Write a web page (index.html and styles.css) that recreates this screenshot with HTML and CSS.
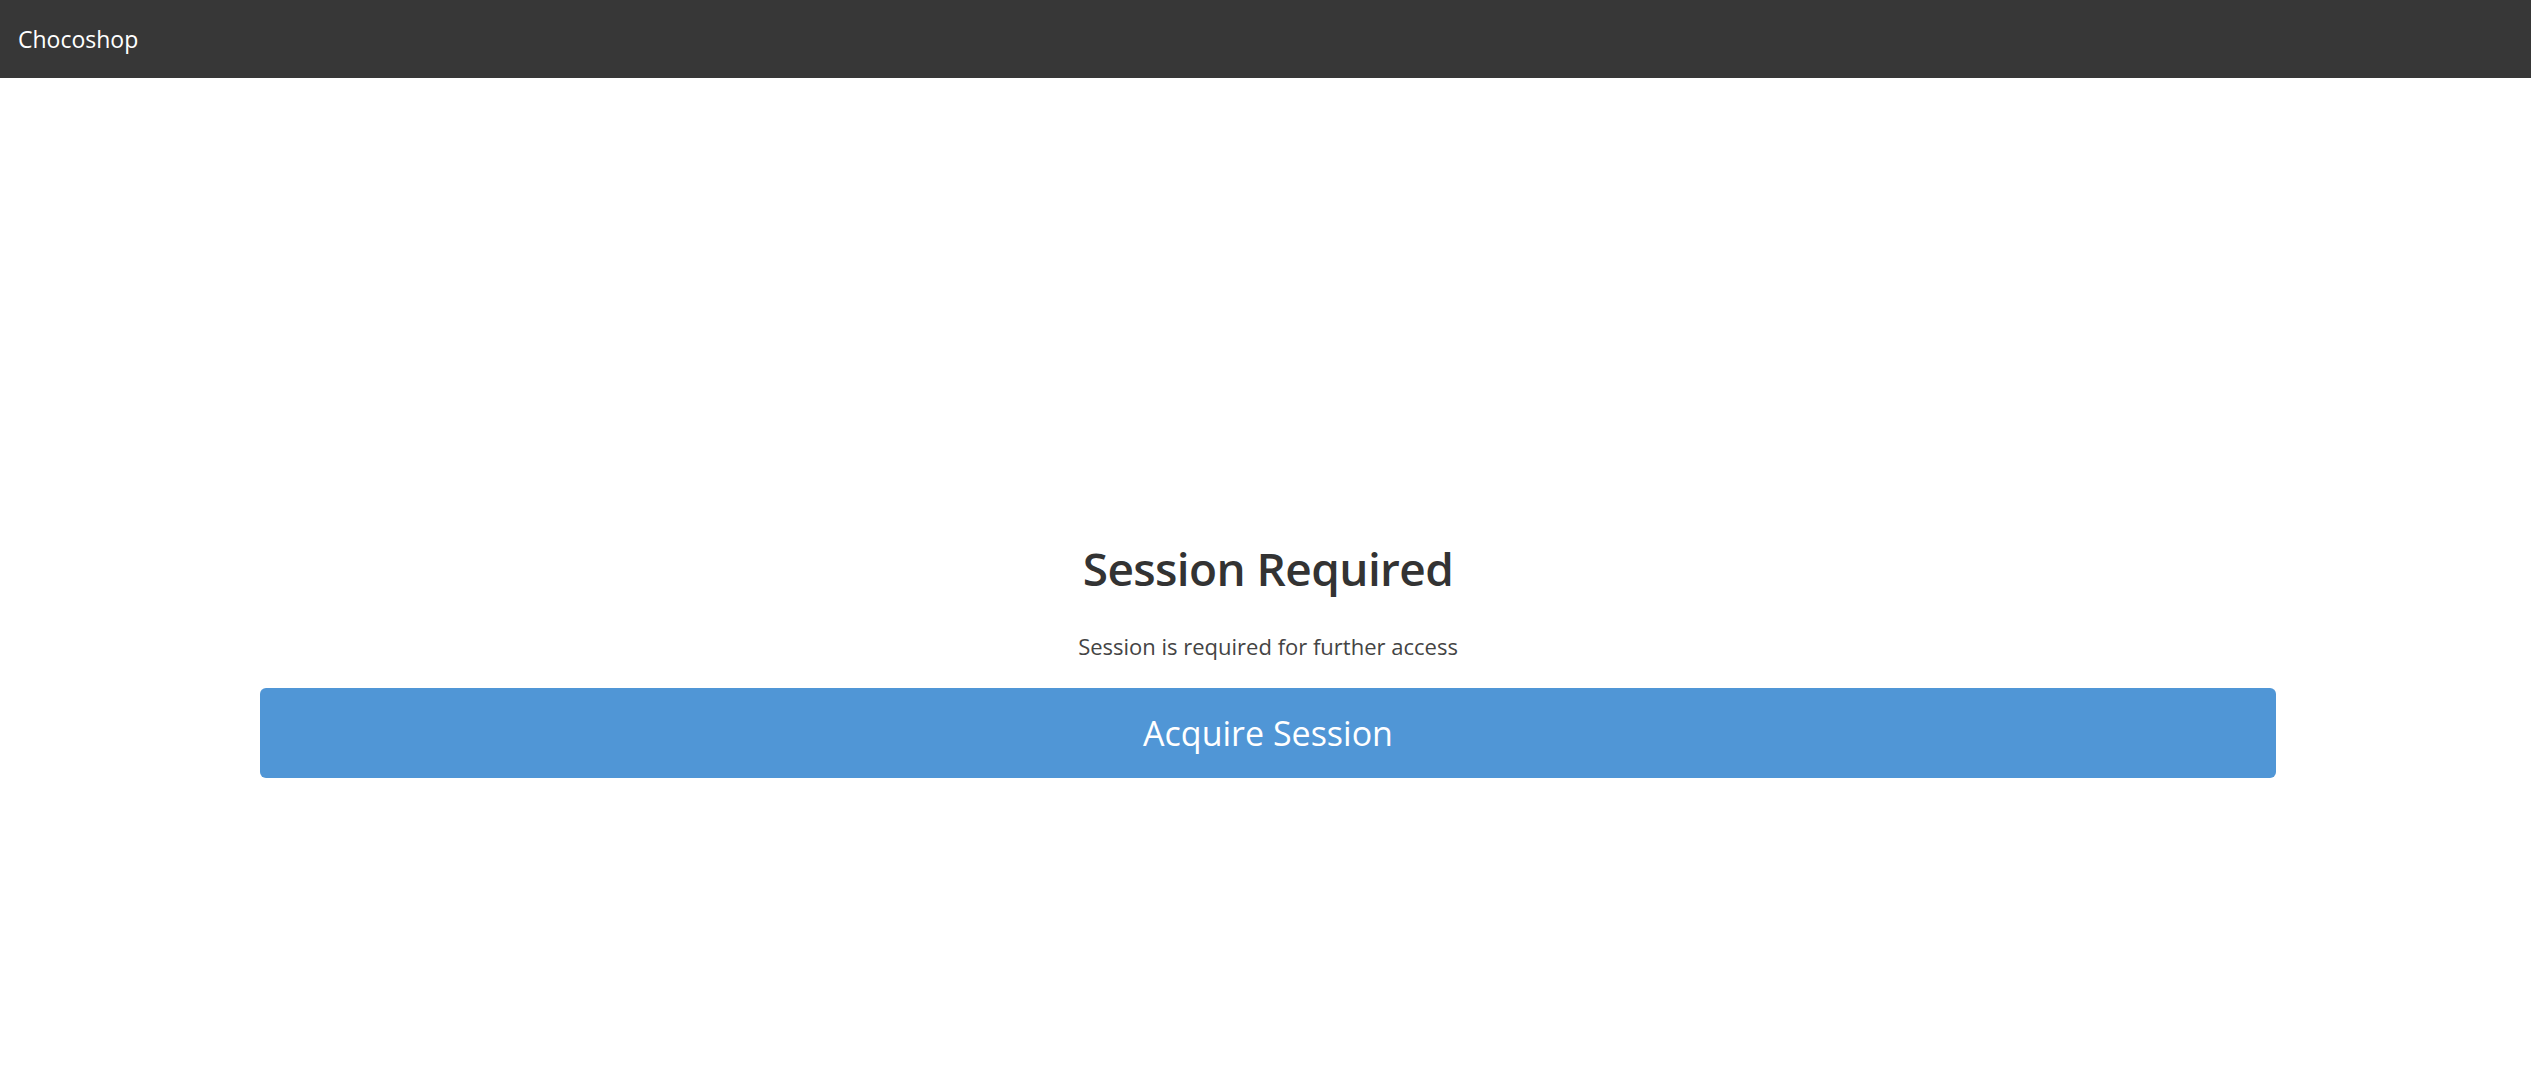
FILE: index.html
```html
<!DOCTYPE html>
<html lang="en">
<head>
<meta charset="utf-8">
<title>Chocoshop</title>
<link rel="stylesheet" href="styles.css">
</head>
<body>
<header class="navbar">
  <a class="brand" href="#">Chocoshop</a>
</header>
<main class="content">
  <div class="panel">
    <h2 class="title">Session Required</h2>
    <p class="subtitle">Session is required for further access</p>
    <button class="btn-acquire" type="button">Acquire Session</button>
  </div>
</main>
</body>
</html>
```

FILE: styles.css
```css
html, body {
  margin: 0;
  padding: 0;
  background: #ffffff;
  font-family: "Open Sans", "Noto Sans", sans-serif;
}

.navbar {
  height: 78px;
  background: #373737;
  display: flex;
  align-items: center;
  padding-left: 18px;
}

.brand {
  color: #ffffff;
  text-decoration: none;
  font-size: 23px;
}

.content {
  padding-top: 464px;
  padding-left: 260px;
}

.panel {
  width: 2016px;
  display: flex;
  flex-direction: column;
}

.title {
  margin: 0;
  text-align: center;
  font-size: 46px;
  line-height: 52px;
  font-weight: 600;
  letter-spacing: -0.6px;
  color: #333333;
}

.subtitle {
  margin: 37px 0 0 0;
  text-align: center;
  font-size: 22px;
  line-height: 31px;
  color: #444444;
}

.btn-acquire {
  margin-top: 26px;
  height: 90px;
  border: none;
  border-radius: 6px;
  background: #5096d6;
  color: #ffffff;
  font-family: inherit;
  font-size: 34px;
  display: flex;
  align-items: center;
  justify-content: center;
  padding: 0;
}
```
